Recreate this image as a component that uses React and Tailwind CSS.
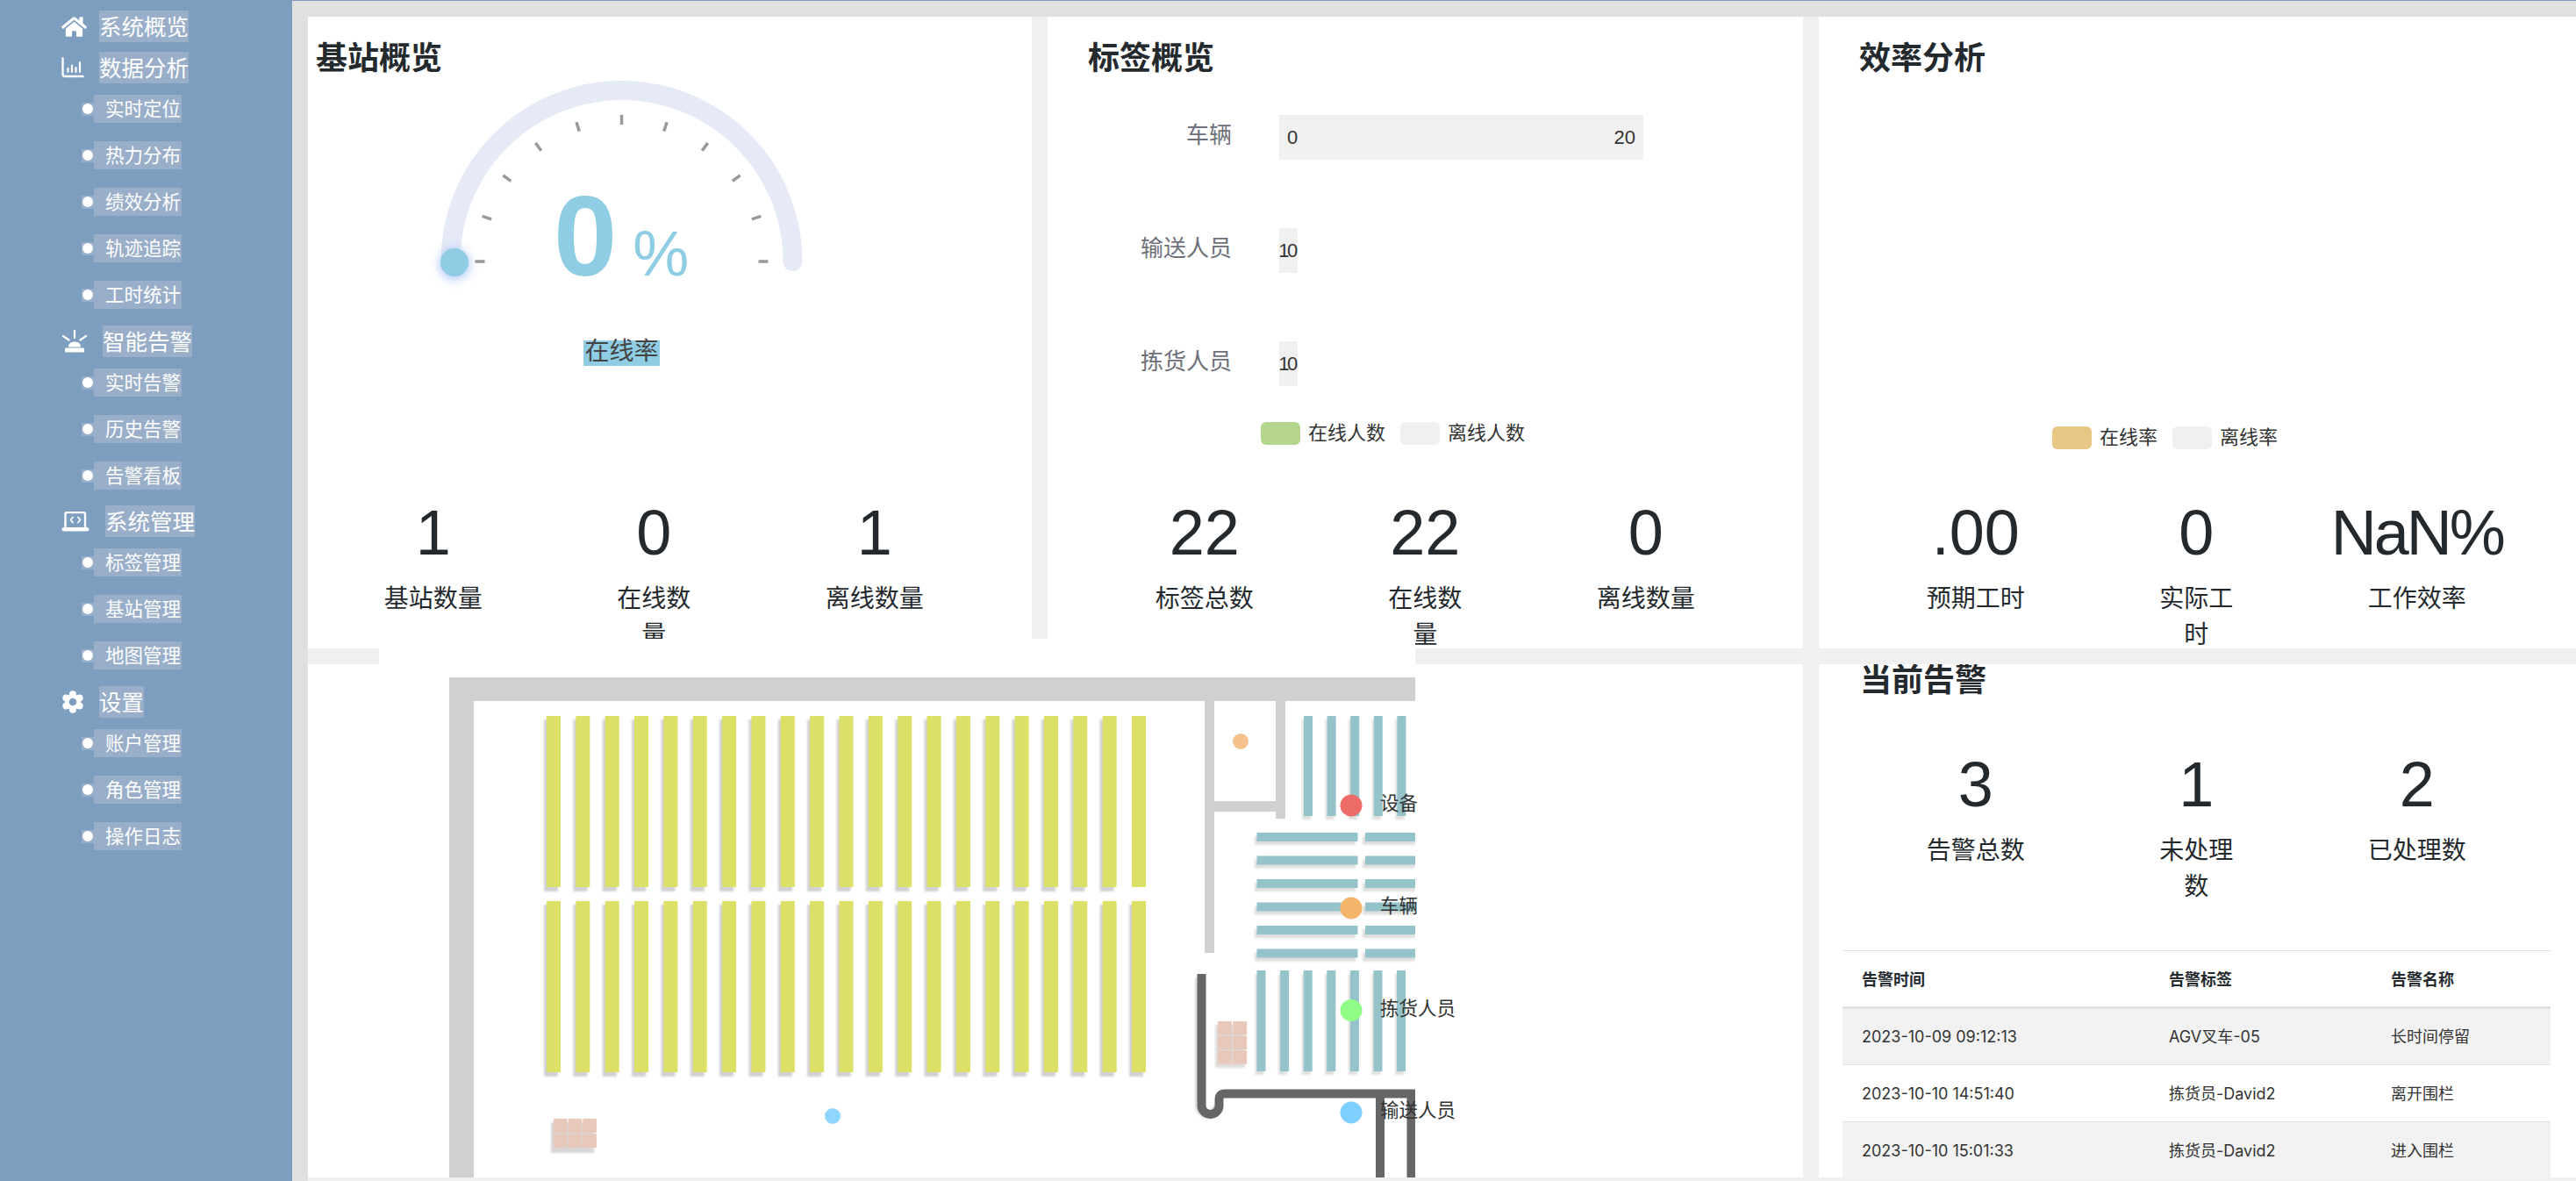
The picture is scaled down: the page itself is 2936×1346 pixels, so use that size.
import React from 'react';
import { FaHome } from 'react-icons/fa';

const ChartIcon = () => (
    <svg width="26" height="24" viewBox="0 0 26 24" fill="none" stroke="white" strokeLinecap="round">
        <path d="M1.5 1.5V19.5a2.5 2.5 0 0 0 2.5 2.5H24.5" strokeWidth="2.4"/>
        <path d="M7.5 17V13M12 17V9.5M16.5 17V12M21 17V6" strokeWidth="2.2"/>
    </svg>
);

const AlarmIcon = () => (
    <svg width="30" height="26" viewBox="0 0 30 26" fill="none">
        <path d="M15 1V9M2 7L8.5 11.5M28 7L21.5 11.5" stroke="white" strokeWidth="2.2" strokeLinecap="round"/>
        <path d="M8 19.5C8 15.5 11 13.5 15 13.5S22 15.5 22 19.5Z" fill="white"/>
        <rect x="4" y="20.5" width="22" height="5" rx="1" fill="white"/>
    </svg>
);

const LaptopIcon = () => (
    <svg width="32" height="23" viewBox="0 0 32 23" fill="none">
        <path d="M4.5 18V3a2 2 0 0 1 2-2H25a2 2 0 0 1 2 2V18" stroke="white" strokeWidth="2.4"/>
        <rect x="0.5" y="18" width="31" height="4.5" rx="2.2" fill="white"/>
        <path d="M13 6.5L10.5 9.5L13 12.5M19 6.5L21.5 9.5L19 12.5" stroke="white" strokeWidth="1.8" strokeLinecap="round" strokeLinejoin="round"/>
    </svg>
);

// six round lobes and a hole, the package gears have square teeth
const GearIcon = () => (
    <svg width="26" height="26" viewBox="0 0 26 26">
        <circle cx="13" cy="13" r="9" fill="white"/>
        {[0, 60, 120, 180, 240, 300].map((a) => (
            <circle key={a} cx={13 + 8.8 * Math.sin((a * Math.PI) / 180)} cy={13 - 8.8 * Math.cos((a * Math.PI) / 180)} r="4" fill="white"/>
        ))}
        <circle cx="13" cy="13" r="4.3" fill="#7d9ebf"/>
    </svg>
);

const menu = [
    { label: '系统概览', icon: <FaHome size={29} color="white" />, iconWidth: 'w-[43px]', subs: [], gap: 'mt-[12px]' },
    { label: '数据分析', icon: <ChartIcon />, iconWidth: 'w-[43px]', subs: ['实时定位', '热力分布', '绩效分析', '轨迹追踪', '工时统计'], gap: 'mt-[11px]' },
    { label: '智能告警', icon: <AlarmIcon />, iconWidth: 'w-[47px]', subs: ['实时告警', '历史告警', '告警看板'], gap: 'mt-[19px]' },
    { label: '系统管理', icon: <LaptopIcon />, iconWidth: 'w-[50px]', subs: ['标签管理', '基站管理', '地图管理'], gap: 'mt-[18px]' },
    { label: '设置', icon: <GearIcon />, iconWidth: 'w-[43px]', subs: ['账户管理', '角色管理', '操作日志'], gap: 'mt-[19px]' },
];

const Sidebar = () => (
    <aside className="w-[333px] shrink-0 bg-[#7d9ebf] text-white font-['Noto_Sans_CJK_SC',sans-serif]">
        {menu.map((item) => (
            <div key={item.label} className={item.gap}>
                <div className="flex items-center pl-[70px] h-[36px]">
                    <div className={`${item.iconWidth} shrink-0`}>{item.icon}</div>
                    <span className="bg-[#99aec8] text-[25.5px] leading-[33px] pb-[3px]">{item.label}</span>
                </div>
                {item.subs.length > 0 && (
                    <div className="flex flex-col gap-[21px] mt-[13px]">
                        {item.subs.map((sub) => (
                            <div key={sub} className="flex items-center pl-[93px] h-[32px]">
                                <div className="w-[14px] h-[15px] bg-[#99aec8] flex items-center justify-center">
                                    <div className="w-[12px] h-[12px] rounded-full bg-white"></div>
                                </div>
                                <span className="bg-[#99aec8] pl-[13px] w-[100px] text-[21.5px] leading-[30px] pb-[2px] whitespace-nowrap">{sub}</span>
                            </div>
                        ))}
                    </div>
                )}
            </div>
        ))}
    </aside>
);

const Title = ({ children, className }) => (
    <h2 className={`text-[36px] leading-[40px] font-bold text-[#24292e] ${className}`}>{children}</h2>
);

const Stats = ({ items, className }) => (
    <div className={`flex ${className}`}>
        {items.map((s, i) => (
            <div key={s.label} className="w-[251.5px] flex flex-col items-center text-[#24292e]">
                <div className={`text-[72px] leading-[72px] whitespace-nowrap ${s.tight ? 'tracking-[-3px]' : ''}`}>{s.value}</div>
                <div className={`mt-[19px] text-[28px] leading-[41px] text-center ${i === 1 ? 'w-[90px]' : 'w-[130px]'}`}>{s.label}</div>
            </div>
        ))}
    </div>
);

const Gauge = () => {
    const cx = 357.5;
    const cy = 212;
    const ticks = [0, 18, 36, 54, 72, 90, 108, 126, 144, 162, 180];
    return (
        <div className="relative h-[484px]">
            <svg width="825" height="484" viewBox="0 1 825 484" fill="none">
                <defs>
                    <filter id="glow" x="-100%" y="-100%" width="300%" height="300%">
                        <feGaussianBlur stdDeviation="6"/>
                    </filter>
                </defs>
                <path d={`M${cx - 195} ${cy}A195 195 0 0 1 ${cx + 195} ${cy}`} stroke="#e6eaf6" strokeWidth="22" strokeLinecap="round"/>
                {ticks.map((a) => {
                    const r = (a * Math.PI) / 180;
                    return (
                        <line key={a} x1={cx + 156 * Math.cos(r)} y1={cy - 156 * Math.sin(r)} x2={cx + 167 * Math.cos(r)} y2={cy - 167 * Math.sin(r)} stroke="#999" strokeWidth="3.5"/>
                    );
                })}
                <circle cx="167" cy="215" r="17" fill="#6f9df5" opacity="0.6" filter="url(#glow)"/>
                <circle cx="167" cy="213" r="16" fill="#8fcde5"/>
            </svg>
            <div className="absolute left-[280px] top-[117px] flex items-baseline text-[#8fcde5]">
                <span className="text-[130px] leading-[130px] font-bold">0</span>
                <span className="text-[72px] leading-[72px] ml-[18px]">%</span>
            </div>
            <div className="absolute left-[314px] top-[301px] bg-[#8fcde5] text-[#444] text-[28px] leading-[26px] pb-[3px] px-[1.5px]">在线率</div>
        </div>
    );
};

const barRows = [
    { label: '车辆', width: 'w-[415px]', values: ['0', '20'] },
    { label: '输送人员', width: 'w-[21px]', values: ['10'] },
    { label: '拣货人员', width: 'w-[21px]', values: ['10'] },
];

const TagChart = () => (
    <div className="h-[484px] pt-[44px]">
        <div className="flex flex-col gap-[78px]">
            {barRows.map((row) => (
                <div key={row.label} className="flex items-center h-[51px]">
                    <div className="w-[210px] text-right text-[26px] text-[#6e7079] pb-[4px]">{row.label}</div>
                    <div className={`ml-[54px] h-[51px] bg-[#f0f0f0] flex items-center text-[22px] text-[#333] ${row.width} ${row.values.length > 1 ? 'justify-between px-[9px]' : 'justify-center tracking-[-2.5px] pr-[3px]'}`}>
                        {row.values.map((v) => <span key={v}>{v}</span>)}
                    </div>
                </div>
            ))}
        </div>
        <Legend className="mt-[41px] pl-[243px]" color="bg-[#b5d58e]" items={['在线人数', '离线人数']} gap="gap-[17px]" />
    </div>
);

const Legend = ({ className, color, items, gap }) => (
    <div className={`flex items-center ${gap} ${className}`}>
        {items.map((text, i) => (
            <div key={text} className="flex items-center gap-[9px]">
                <div className={`w-[45px] h-[26px] rounded-[6px] ${i === 0 ? color : 'bg-[#f0f0f0]'}`}></div>
                <span className="text-[22px] leading-[26px] text-[#333] whitespace-nowrap">{text}</span>
            </div>
        ))}
    </div>
);

const range = (n) => Array.from({ length: n }, (_, i) => i);

const Racks = () => {
    const yellowXs = range(21).map((i) => 623 + i * 33.35);
    const tealTop = range(5).map((i) => 1486 + i * 26.6);
    const tealBottom = range(7).map((i) => 1432.5 + i * 26.6);
    const tealRows = range(6).map((i) => 949 + i * 26.5);
    return (
        <svg className="block" width="1181" height="614" viewBox="432 728 1181 614">
            <defs>
                <filter id="soft" x="-5%" y="-5%" width="110%" height="110%">
                    <feGaussianBlur stdDeviation="1"/>
                </filter>
            </defs>
            {/* walls */}
            <rect x="512" y="772" width="1101" height="27" fill="#d0d0d0"/>
            <rect x="512" y="772" width="28" height="570" fill="#d0d0d0"/>
            <rect x="1373" y="799" width="11" height="287" fill="#d0d0d0"/>
            <rect x="1454" y="799" width="11" height="134" fill="#d0d0d0"/>
            <rect x="1384" y="913" width="70" height="12" fill="#d0d0d0"/>
            {/* shadows under the racks */}
            <g filter="url(#soft)">
                {yellowXs.map((x, i) => (
                    <g key={x} fill="#d2d0d0">
                        {i < 20 && <rect x={x - 3} y="820" width="16" height="196"/>}
                        <rect x={x - 3} y="1031" width="16" height="196"/>
                    </g>
                ))}
                {tealTop.map((x) => <rect key={x} x={x - 2} y="820" width="10" height="114" fill="#dedede"/>)}
                {tealRows.map((y) => (
                    <g key={y} fill="#dedede">
                        <rect x="1430" y={y + 4} width="115" height="10"/>
                        <rect x="1553" y={y + 4} width="60" height="10"/>
                    </g>
                ))}
                {tealBottom.map((x) => <rect key={x} x={x - 2} y="1110" width="10" height="115" fill="#dedede"/>)}
                <rect x="628" y="1279" width="49" height="35" fill="#d8d6d6"/>
                <rect x="1385" y="1168" width="34" height="49" fill="#dedcdc"/>
                <path d="M1367 1114V1260a10 10 0 0 0 20 0" fill="none" stroke="#d8d8d8" strokeWidth="10"/>
            </g>
            {/* yellow racks */}
            {yellowXs.map((x) => (
                <g key={x} fill="#dce066">
                    <rect x={x} y="816" width="16" height="195"/>
                    <rect x={x} y="1027" width="16" height="195"/>
                </g>
            ))}
            {/* teal racks */}
            {tealTop.map((x) => <rect key={x} x={x} y="816" width="10" height="114" fill="#94c3ca"/>)}
            {tealRows.map((y) => (
                <g key={y} fill="#94c3ca">
                    <rect x="1432.5" y={y} width="115" height="10"/>
                    <rect x="1556" y={y} width="57" height="10"/>
                </g>
            ))}
            {tealBottom.map((x) => <rect key={x} x={x} y="1106" width="10" height="115" fill="#94c3ca"/>)}
            {/* pallets */}
            {range(3).map((c) => range(2).map((r) => (
                <rect key={`a${c}${r}`} x={631 + c * 16.7} y={1275 + r * 17} width="15.500" height="16" fill="#e8c8ba"/>
            )))}
            {range(2).map((c) => range(3).map((r) => (
                <rect key={`b${c}${r}`} x={1388 + c * 17.2} y={1164 + r * 16.6} width="16" height="15.500" fill="#e8c8ba"/>
            )))}
            {/* conveyor */}
            <path d="M1369.5 1110V1260a10 10 0 0 0 20 0V1253q0-6.500 6.500-6.500H1613" fill="none" stroke="#666666" strokeWidth="10"/>
            <rect x="1568" y="1246" width="10" height="96" fill="#666666"/>
            <rect x="1603.500" y="1246" width="10" height="96" fill="#666666"/>
            {/* small markers */}
            <circle cx="1414" cy="845" r="9" fill="#f6c28b"/>
            <circle cx="949" cy="1272" r="9" fill="#90d5ff"/>
            {/* legend markers */}
            <circle cx="1540" cy="918" r="12.500" fill="#ee6d6b"/>
            <circle cx="1540" cy="1035" r="12.500" fill="#f4b56b"/>
            <circle cx="1540" cy="1151.500" r="12.500" fill="#90fd87"/>
            <circle cx="1540" cy="1268" r="12.500" fill="#80d0ff"/>
        </svg>
    );
};

const mapLabels = [
    { text: '设备', top: 'top-[173px]' },
    { text: '车辆', top: 'top-[290px]' },
    { text: '拣货人员', top: 'top-[407px]' },
    { text: '输送人员', top: 'top-[523px]' },
];

const MapOverlay = () => (
    <div className="absolute left-[81px] top-[-29px] w-[1181px] h-[614px] bg-white z-10">
        <Racks />
        {mapLabels.map((l) => (
            <div key={l.text} className={`absolute left-[1141px] ${l.top} text-[21.500px] leading-[30px] text-[#333] whitespace-nowrap`}>{l.text}</div>
        ))}
    </div>
);

const alarms = [
    { time: '2023-10-09 09:12:13', tag: 'AGV叉车-05', name: '长时间停留', shade: true },
    { time: '2023-10-10 14:51:40', tag: '拣货员-David2', name: '离开围栏', shade: false },
    { time: '2023-10-10 15:01:33', tag: '拣货员-David2', name: '进入围栏', shade: true },
];

const AlarmTable = () => (
    <table className="ml-[27px] mt-[54px] w-[807px] table-fixed border-collapse font-['Inter','Noto_Sans_CJK_SC',sans-serif] text-[18px] text-[#333]">
        <colgroup>
            <col className="w-[350px]"/>
            <col className="w-[253px]"/>
            <col className="w-[204px]"/>
        </colgroup>
        <thead>
            <tr className="h-[65px] border-t border-[#dee2e6] border-b-[3px] border-b-[#dee2e6]">
                <th className="pl-[22px] text-left font-bold text-[#24292e] font-['Noto_Sans_CJK_SC',sans-serif]">告警时间</th>
                <th className="pl-[22px] text-left font-bold text-[#24292e] font-['Noto_Sans_CJK_SC',sans-serif]">告警标签</th>
                <th className="pl-[22px] text-left font-bold text-[#24292e] font-['Noto_Sans_CJK_SC',sans-serif]">告警名称</th>
            </tr>
        </thead>
        <tbody>
            {alarms.map((a) => (
                <tr key={a.time} className={`h-[65px] border-b border-[#dee2e6] ${a.shade ? 'bg-[#f2f2f3]' : 'bg-white'}`}>
                    <td className="pl-[22px]">{a.time}</td>
                    <td className="pl-[22px]">{a.tag}</td>
                    <td className="pl-[22px]">{a.name}</td>
                </tr>
            ))}
        </tbody>
    </table>
);

export default function App() {
    return (
        <div className="flex h-screen overflow-hidden font-['Liberation_Sans','Noto_Sans_CJK_SC',sans-serif]">
            <Sidebar />
            <main className="flex-1 min-w-0 bg-[#e0e0e0] border-t border-[#7d9ebf] pt-[18px] pl-[18px]">
                <div className="grid grid-cols-[825px_861px_863px] grid-rows-[720px_585px] gap-[18px] bg-[#f0f0f0] h-full">
                    <section className="bg-white">
                        <Title className="mt-[28px] ml-[9px]">基站概览</Title>
                        <Gauge />
                        <Stats className="pl-[17px]" items={[
                            { value: '1', label: '基站数量' },
                            { value: '0', label: '在线数量' },
                            { value: '1', label: '离线数量' },
                        ]} />
                    </section>
                    <section className="bg-white">
                        <Title className="mt-[28px] ml-[46px]">标签概览</Title>
                        <TagChart />
                        <Stats className="pl-[53px]" items={[
                            { value: '22', label: '标签总数' },
                            { value: '22', label: '在线数量' },
                            { value: '0', label: '离线数量' },
                        ]} />
                    </section>
                    <section className="bg-white">
                        <Title className="mt-[28px] ml-[46px]">效率分析</Title>
                        <div className="h-[484px] pt-[399px]">
                            <Legend className="pl-[266px]" color="bg-[#e8c684]" items={['在线率', '离线率']} gap="gap-[17px]" />
                        </div>
                        <Stats className="pl-[53px]" items={[
                            { value: '.00', label: '预期工时' },
                            { value: '0', label: '实际工时' },
                            { value: 'NaN%', label: '工作效率', tight: true },
                        ]} />
                    </section>
                    <section className="col-span-2 bg-white relative">
                        <MapOverlay />
                    </section>
                    <section className="bg-white overflow-hidden">
                        <Title className="mt-[-1px] ml-[47px]">当前告警</Title>
                        <Stats className="pl-[53px] mt-[62px] h-[171px]" items={[
                            { value: '3', label: '告警总数' },
                            { value: '1', label: '未处理数' },
                            { value: '2', label: '已处理数' },
                        ]} />
                        <AlarmTable />
                    </section>
                </div>
            </main>
        </div>
    );
}
